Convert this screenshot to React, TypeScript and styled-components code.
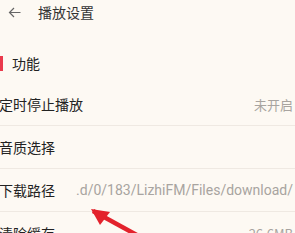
import styled, { createGlobalStyle } from "styled-components";

const Global = createGlobalStyle`
  html, body {
    margin: 0;
    padding: 0;
    background: #fdf9f3;
  }
  body {
    width: 295px;
    height: 233px;
    overflow: hidden;
    font-family: "Noto Sans CJK SC", "Noto Sans", sans-serif;
  }
`;

const Page = styled.div`
  position: relative;
  width: 295px;
  height: 233px;
  overflow: hidden;
  background: #fdf9f3;
`;

const Header = styled.div`
  display: flex;
  align-items: center;
  height: 22px;
  padding: 1px 0 0 8px;
  gap: 17px;
`;

const Title = styled.div`
  font-size: 14px;
  color: #333;
  line-height: 22px;
`;

const SectionTitle = styled.div`
  display: flex;
  align-items: center;
  gap: 9px;
  padding: 32px 0 12px;
  font-size: 14px;
  color: #222;
  line-height: 16px;
`;

const RedBar = styled.span`
  width: 3px;
  height: 15px;
  background: #ea3a4c;
`;

const List = styled.div`
  display: flex;
  flex-direction: column;
`;

const Row = styled.div`
  display: flex;
  align-items: center;
  justify-content: space-between;
  height: 42px;
  margin-left: -1px;
  padding-right: 2px;
  border-bottom: 1px solid #efe9e2;
  gap: 20px;
`;

const Label = styled.span`
  font-size: 14px;
  color: #222;
  white-space: nowrap;
`;

const Value = styled.span<{ $path?: boolean }>`
  font-size: ${(p) => (p.$path ? "14px" : "13px")};
  color: #a8a4a0;
  white-space: nowrap;
  overflow: hidden;
  font-family: ${(p) => (p.$path ? "Roboto, sans-serif" : "inherit")};
  direction: ${(p) => (p.$path ? "rtl" : "ltr")};
`;

const Arrow = styled.svg`
  position: absolute;
  left: 85px;
  top: 200px;
`;

function BackIcon() {
  return (
    <svg width="13" height="11" viewBox="0 0 13 11">
      <path d="M12.5 5.5H1.5M6 1L1.5 5.5 6 10" fill="none" stroke="#666" strokeWidth="1.2" />
    </svg>
  );
}

export default function App() {
  return (
    <Page>
      <Global />
      <Header>
        <BackIcon />
        <Title>播放设置</Title>
      </Header>
      <SectionTitle>
        <RedBar />
        功能
      </SectionTitle>
      <List>
        <Row>
          <Label>定时停止播放</Label>
          <Value>未开启</Value>
        </Row>
        <Row>
          <Label>音质选择</Label>
          <Value></Value>
        </Row>
        <Row>
          <Label>下载路径</Label>
          <Value $path>&lrm;.d/0/183/LizhiFM/Files/download/&lrm;</Value>
        </Row>
        <Row>
          <Label>清除缓存</Label>
          <Value>26.6MB</Value>
        </Row>
      </List>
      <Arrow width="80" height="40" viewBox="0 0 80 40">
        <path d="M8 11L70 45" stroke="#e3222c" strokeWidth="4.5" />
        <path d="M6 9L25 12L15 25Z" fill="#e3222c" />
      </Arrow>
    </Page>
  );
}
